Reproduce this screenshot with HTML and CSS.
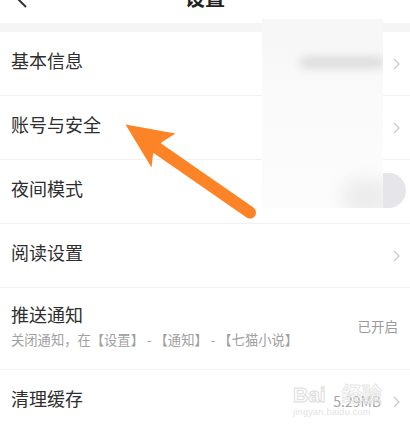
FILE: index.html
```html
<!DOCTYPE html>
<html lang="zh-CN">
<head>
    <meta charset="UTF-8">
    <meta name="viewport" content="width=device-width, initial-scale=1.0">
    <title>设置</title>
    <link rel="stylesheet" href="styles.css">
</head>
<body>
    <div class="screen">
        <div class="header">
            <svg class="back" width="12" height="22" viewBox="0 0 12 22">
                <polyline points="11,1 1,11 11,21" fill="none" stroke="#333" stroke-width="2"/>
            </svg>
            <h1 class="title">设置</h1>
            <span></span>
        </div>
        <div class="band"></div>

        <div class="list">
            <div class="row">
                <span class="label">基本信息</span>
                <span class="right">
                    <svg class="chev" width="7" height="12" viewBox="0 0 7 12"><polyline points="1,1 6,6 1,11" fill="none" stroke="#c9c9c9" stroke-width="1.2"/></svg>
                </span>
            </div>
            <div class="row">
                <span class="label">账号与安全</span>
                <span class="right">
                    <svg class="chev" width="7" height="12" viewBox="0 0 7 12"><polyline points="1,1 6,6 1,11" fill="none" stroke="#c9c9c9" stroke-width="1.2"/></svg>
                </span>
            </div>
            <div class="row row-switch">
                <span class="label">夜间模式</span>
                <span class="switch"></span>
            </div>
            <div class="row">
                <span class="label">阅读设置</span>
                <span class="right">
                    <svg class="chev" width="7" height="12" viewBox="0 0 7 12"><polyline points="1,1 6,6 1,11" fill="none" stroke="#c9c9c9" stroke-width="1.2"/></svg>
                </span>
            </div>
            <div class="row row-tall">
                <div class="stack">
                    <span class="label">推送通知</span>
                    <span class="sub">关闭通知，在【设置】 - 【通知】 - 【七猫小说】</span>
                </div>
                <span class="right status">已开启</span>
            </div>
            <div class="row">
                <span class="label">清理缓存</span>
                <span class="right">
                    <span class="value">5.29MB</span>
                    <svg class="chev" width="7" height="12" viewBox="0 0 7 12"><polyline points="1,1 6,6 1,11" fill="none" stroke="#c9c9c9" stroke-width="1.2"/></svg>
                </span>
            </div>
        </div>

        <!-- blurred patch over personal info -->
        <div class="mask">
            <div class="mask-bar"></div>
            <div class="mask-blob"></div>
        </div>

        <!-- annotation arrow -->
        <svg class="arrow" width="410" height="430" viewBox="0 0 410 430">
            <line x1="157" y1="148" x2="250" y2="212.5" stroke="#fd8327" stroke-width="12" stroke-linecap="round"/>
            <polygon points="125.5,124.5 175.5,133.5 162,142 153,154 151.5,167.5" fill="#fd8327"/>
        </svg>

        <div class="watermark">
            <span class="wm-logo">Bai<span class="wm-cn">经验</span></span>
            <span class="wm-url">jingyan.baidu.com</span>
        </div>
    </div>
</body>
</html>
```

FILE: styles.css
```css
body {
    margin: 0;
    padding: 0;
    background: #fff;
    font-family: "Noto Sans CJK SC", "Noto Sans", sans-serif;
}
.screen {
    position: relative;
    width: 410px;
    height: 430px;
    overflow: hidden;
}
.header {
    display: grid;
    grid-template-columns: 1fr auto 1fr;
    align-items: center;
    height: 50px;
    margin-top: -27px;
    background: #fff;
}
.back {
    margin-left: 15px;
    margin-top: -2px;
}
.title {
    margin: 0;
    font-size: 20px;
    font-weight: bold;
    line-height: 48px;
    color: #222;
}
.band {
    height: 9px;
    background: #f5f5f5;
}
.row {
    display: flex;
    align-items: center;
    height: 63px;
    padding: 0 10px 0 11px;
    border-bottom: 1px solid #f1f1f1;
}
.row-tall {
    height: 81px;
    padding-right: 12px;
}
.row-switch {
    padding-right: 4px;
}
.label {
    font-size: 18px;
    color: #2e2e2e;
    line-height: 24px;
    margin-top: -7px;
}
.right {
    margin-left: auto;
    display: flex;
    align-items: center;
    gap: 12px;
}
.value {
    font-size: 14px;
    color: #a5a5a5;
    margin-top: -2px;
}
.status {
    font-size: 13.5px;
    color: #9a9a9a;
    margin-top: -5px;
}
.stack {
    display: flex;
    flex-direction: column;
    margin-top: -6px;
}
.stack .label {
    margin-top: 0;
}
.sub {
    margin-top: 5px;
    font-size: 13.3px;
    line-height: 18px;
    color: #a0a0a0;
    white-space: pre;
}
.switch {
    margin-left: auto;
    width: 58px;
    height: 35px;
    border-radius: 18px;
    background: #e6e6ea;
    margin-top: -3px;
}
.mask {
    position: absolute;
    left: 262px;
    top: 19px;
    width: 121px;
    height: 189px;
    background: linear-gradient(#f6f6f6, #fafafa 40%, #fcfcfc);
    overflow: hidden;
}
.mask-bar {
    position: absolute;
    left: 38px;
    top: 38px;
    width: 84px;
    height: 11px;
    border-radius: 6px;
    background: #d9d9d9;
    filter: blur(5px);
}
.mask-blob {
    position: absolute;
    left: 80px;
    top: 160px;
    width: 50px;
    height: 36px;
    border-radius: 18px;
    background: #ececec;
    filter: blur(8px);
}
.arrow {
    position: absolute;
    left: 0;
    top: 0;
}
.watermark {
    position: absolute;
    left: 293px;
    top: 382px;
    display: flex;
    flex-direction: column;
    pointer-events: none;
}
.wm-logo {
    font-family: "Liberation Sans", Arial, sans-serif;
    font-weight: bold;
    font-size: 21px;
    line-height: 24px;
    color: transparent;
    -webkit-text-stroke: 1px #dcdcdc;
}
.wm-cn {
    font-family: "Noto Sans CJK SC", sans-serif;
    font-size: 20px;
    margin-left: 16px;
    -webkit-text-stroke: 1px #e6e6e6;
}
.wm-url {
    font-family: "Liberation Sans", Arial, sans-serif;
    font-size: 9px;
    line-height: 10px;
    color: #e2e2e2;
    letter-spacing: 0.3px;
}
```
